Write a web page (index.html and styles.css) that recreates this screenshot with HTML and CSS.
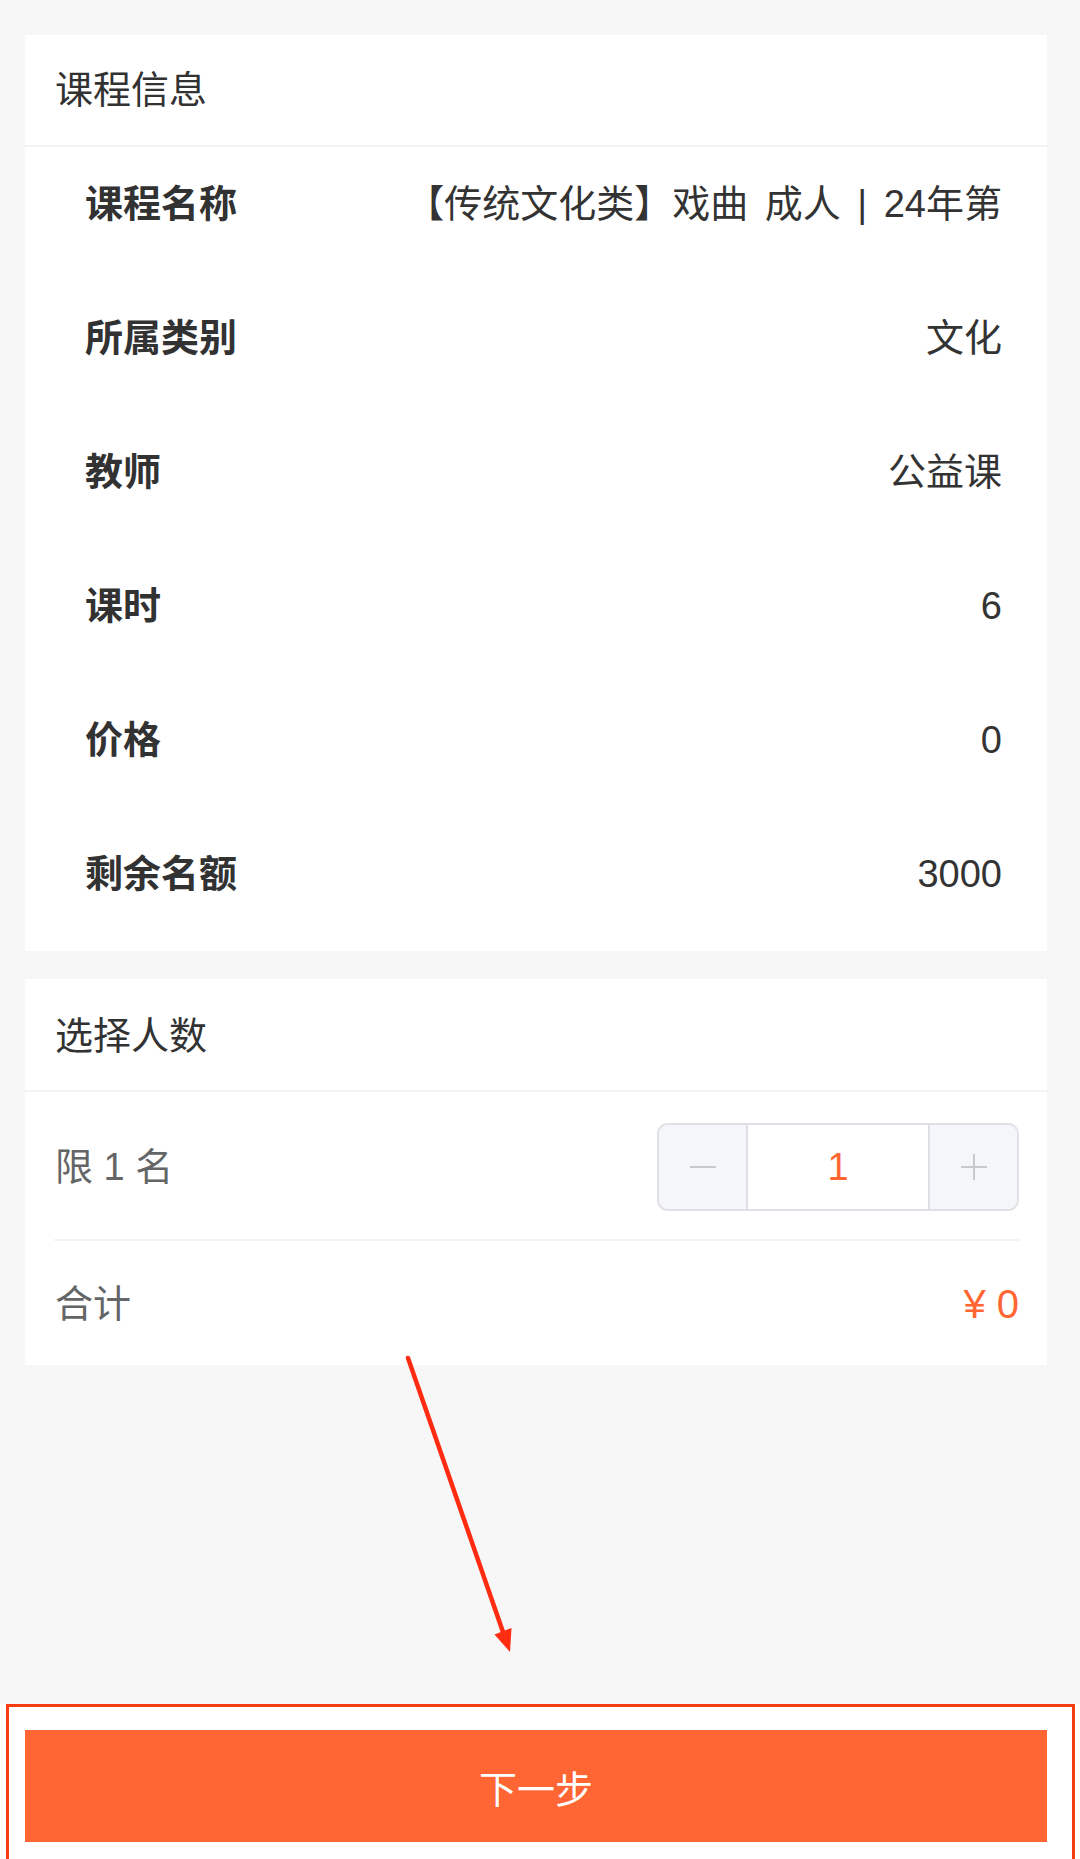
FILE: index.html
```html
<!DOCTYPE html>
<html lang="zh-CN">
<head>
<meta charset="utf-8">
<title>课程信息</title>
<link rel="stylesheet" href="styles.css">
</head>
<body>
<div class="page">
  <main class="main">
    <section class="card">
      <div class="card-title">课程信息</div>
      <div class="info-list">
        <div class="info-row"><span class="info-label">课程名称</span><span class="info-value">【传统文化类】戏曲 成人 | 24年第</span></div>
        <div class="info-row"><span class="info-label">所属类别</span><span class="info-value">文化</span></div>
        <div class="info-row"><span class="info-label">教师</span><span class="info-value">公益课</span></div>
        <div class="info-row"><span class="info-label">课时</span><span class="info-value">6</span></div>
        <div class="info-row"><span class="info-label">价格</span><span class="info-value">0</span></div>
        <div class="info-row"><span class="info-label">剩余名额</span><span class="info-value">3000</span></div>
      </div>
    </section>

    <section class="card card-select">
      <div class="card-title">选择人数</div>
      <div class="select-body">
        <div class="select-row select-row-count">
          <span class="muted">限 1 名</span>
          <div class="stepper">
            <button class="step-btn" type="button" aria-label="减少">
              <svg width="26" height="26" viewBox="0 0 26 26"><path d="M0 13H26" stroke="#c8c9cc" stroke-width="2"/></svg>
            </button>
            <div class="step-value">1</div>
            <button class="step-btn" type="button" aria-label="增加">
              <svg width="26" height="26" viewBox="0 0 26 26"><path d="M0 13H26M13 0V26" stroke="#c8c9cc" stroke-width="2"/></svg>
            </button>
          </div>
        </div>
        <div class="select-row select-row-total">
          <span class="muted">合计</span>
          <span class="total">¥ 0</span>
        </div>
      </div>
    </section>
  </main>

  <footer class="footer">
    <button class="next-btn" type="button">下一步</button>
    <div class="highlight-box"></div>
  </footer>

  <svg class="annot-arrow" viewBox="0 0 1080 1859" width="1080" height="1859">
    <line x1="408" y1="1358" x2="503" y2="1632" stroke="#ff2c12" stroke-width="4.5" stroke-linecap="round"/>
    <polygon points="510,1652 511.5,1628 494.5,1634.5" fill="#ff2c12"/>
  </svg>
</div>
</body>
</html>
```

FILE: styles.css
```css
* {
  box-sizing: border-box;
}

html, body {
  margin: 0;
  padding: 0;
}

body {
  background: #f7f7f7;
  font-family: "Liberation Sans", "Noto Sans CJK SC", sans-serif;
  color: #333333;
}

.page {
  position: relative;
  display: flex;
  flex-direction: column;
  height: 1859px;
  overflow: hidden;
}

.main {
  display: flex;
  flex-direction: column;
  gap: 28px;
  padding-top: 35px;
}

.card {
  background: #ffffff;
  margin: 0 33px 0 25px;
}

.card-title {
  height: 112px;
  display: flex;
  align-items: center;
  padding-left: 30px;
  font-size: 38px;
  line-height: 40px;
  color: #323233;
  border-bottom: 2px solid #f2f3f5;
}

.card-select .card-title {
  height: 113px;
  padding-top: 2px;
}

.info-row {
  display: flex;
  justify-content: space-between;
  align-items: flex-start;
  height: 134px;
  padding: 37px 45px 0 60px;
  font-size: 38px;
  line-height: 40px;
}

.info-label {
  font-weight: 700;
  color: #323233;
  white-space: nowrap;
}

.info-value {
  color: #333333;
  white-space: nowrap;
  text-align: right;
  word-spacing: 6px;
}

.select-body {
  padding: 0 28px 0 29px;
}

.select-row {
  display: flex;
  justify-content: space-between;
  align-items: center;
  font-size: 38px;
  line-height: 40px;
}

.select-row-count {
  height: 149px;
  padding-top: 2px;
  border-bottom: 2px solid #f2f3f5;
}

.select-row-total {
  height: 124px;
  padding-top: 2px;
}

.muted {
  color: #646566;
  padding-left: 1px;
}

.stepper {
  display: flex;
  width: 362px;
  height: 88px;
  border: 2px solid #dfe1e6;
  border-radius: 11px;
  overflow: hidden;
}

.step-btn {
  width: 87px;
  height: 100%;
  border: 0;
  padding: 0;
  margin: 0;
  background: #f5f6fa;
  display: flex;
  align-items: center;
  justify-content: center;
}

.step-value {
  width: 184px;
  border-left: 2px solid #dfe1e6;
  border-right: 2px solid #dfe1e6;
  background: #ffffff;
  display: flex;
  align-items: center;
  justify-content: center;
  color: #ff6633;
  font-size: 38px;
}

.total {
  color: #ff6633;
  font-size: 40px;
}

.footer {
  position: relative;
  margin-top: auto;
  height: 155px;
  background: #ffffff;
  padding-top: 26px;
}

.next-btn {
  display: block;
  width: 1022px;
  height: 112px;
  margin: 0 33px 0 25px;
  border: 0;
  padding: 0;
  background: #ff6633;
  color: #ffffff;
  font-family: "Liberation Sans", "Noto Sans CJK SC", sans-serif;
  font-size: 38px;
}

.highlight-box {
  position: absolute;
  left: 6px;
  right: 5px;
  top: 0;
  bottom: -10px;
  border: 3px solid #fa3c12;
  pointer-events: none;
}

.annot-arrow {
  position: absolute;
  left: 0;
  top: 0;
  pointer-events: none;
}
```
